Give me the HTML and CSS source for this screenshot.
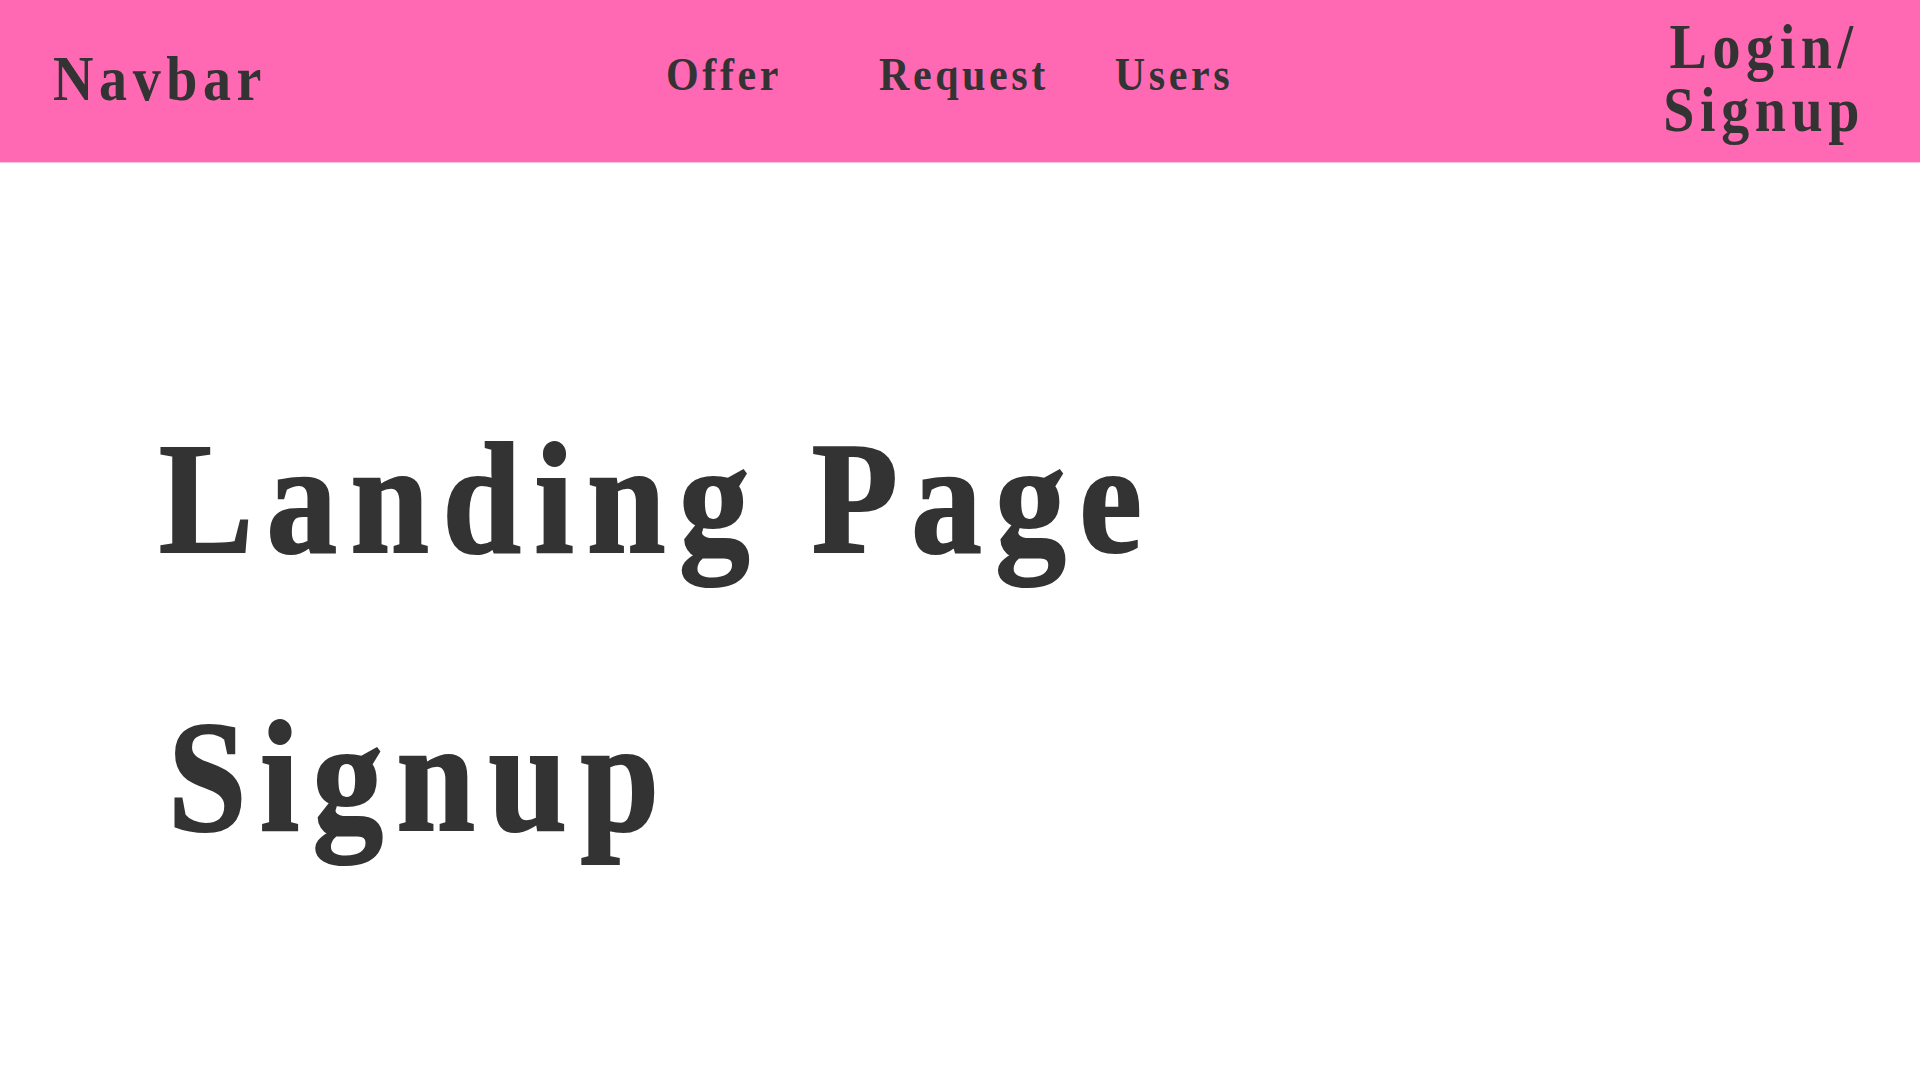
FILE: index.html
```html
<!DOCTYPE html>
<html lang="en">
<head>
<meta charset="utf-8">
<title>Landing Page</title>
<link rel="stylesheet" href="styles.css">
</head>
<body>
<div class="page">
  <header class="navbar">
    <a class="brand" href="#">Navbar</a>
    <nav class="links">
      <a class="link link-offer" href="#">Offer</a>
      <a class="link link-request" href="#">Request</a>
      <a class="link" href="#">Users</a>
    </nav>
    <a class="login" href="#">Login/<br>Signup</a>
  </header>
  <main class="content">
    <h1 class="title">Landing Page</h1>
    <h2 class="signup">Signup</h2>
  </main>
</div>
</body>
</html>
```
FILE: styles.css
```css
html, body {
  margin: 0;
  padding: 0;
  background: #ffffff;
}

body {
  font-family: "Liberation Serif", "Times New Roman", serif;
  font-weight: bold;
  color: #333333;
  min-height: 1080px;
}

.page {
  height: 964px;
  transform: scaleY(1.12);
  transform-origin: top left;
}

a {
  color: #333333;
  text-decoration: none;
}

.navbar {
  height: 145px;
  box-sizing: border-box;
  background: #ff69b4;
  display: flex;
  align-items: center;
  padding: 0 55px 6px 53px;
}

.brand {
  font-size: 56px;
  letter-spacing: 5.6px;
  line-height: 64px;
}

.links {
  display: flex;
  align-items: center;
  margin-left: 399px;
  margin-bottom: 8px;
}

.link {
  font-size: 42px;
  letter-spacing: 3.6px;
  line-height: 48px;
}

.link-offer {
  margin-right: 97px;
}

.link-request {
  margin-right: 66px;
}

.login {
  margin-left: auto;
  font-size: 56px;
  letter-spacing: 5.6px;
  line-height: 56px;
  text-align: center;
}

.content {
  padding: 219px 0 0 159px;
}

.title,
.signup {
  font-size: 141px;
  letter-spacing: 13.5px;
  line-height: 162px;
  font-weight: bold;
  -webkit-text-stroke: 2px #333333;
}

.title {
  margin: 0;
}

.signup {
  margin: 86px 0 0 9px;
}
```
